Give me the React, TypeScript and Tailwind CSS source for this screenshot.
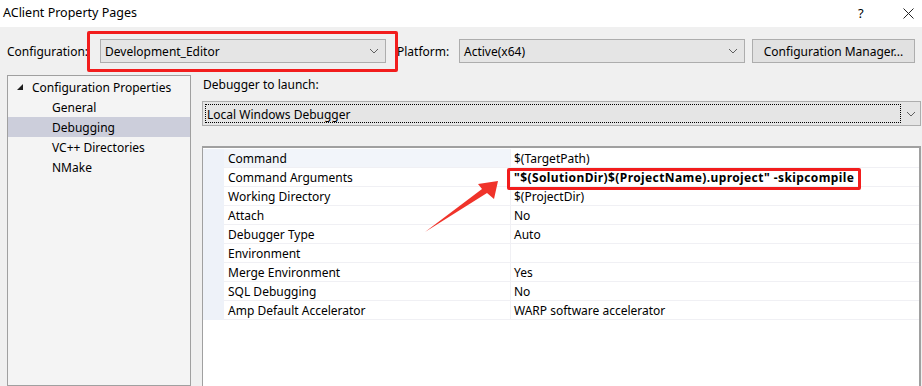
import React from 'react'

const rows: { name: string; value: string; bold?: boolean }[] = [
  { name: 'Command', value: '$(TargetPath)' },
  { name: 'Command Arguments', value: '"$(SolutionDir)$(ProjectName).uproject" -skipcompile', bold: true },
  { name: 'Working Directory', value: '$(ProjectDir)' },
  { name: 'Attach', value: 'No' },
  { name: 'Debugger Type', value: 'Auto' },
  { name: 'Environment', value: '' },
  { name: 'Merge Environment', value: 'Yes' },
  { name: 'SQL Debugging', value: 'No' },
  { name: 'Amp Default Accelerator', value: 'WARP software accelerator' },
]

const treeItems = [
  { label: 'General', selected: false },
  { label: 'Debugging', selected: true },
  { label: 'VC++ Directories', selected: false },
  { label: 'NMake', selected: false },
]

function Chevron() {
  return (
    <svg width="10" height="6" viewBox="0 0 10 6" className="shrink-0">
      <path d="M1 1l4 4 4-4" fill="none" stroke="#606060" strokeWidth="1" />
    </svg>
  )
}

function Combo({ text, width }: { text: string; width: string }) {
  return (
    <div className={`${width} h-[24px] flex items-center justify-between pl-[4px] pr-[6px] border border-[#adadad] bg-[#e5e5e5]`}>
      <span className="pt-[2px]">{text}</span>
      <Chevron />
    </div>
  )
}

export default function App() {
  return (
    <div className="relative w-[922px] h-[386px] overflow-hidden bg-[#f0f0f0] text-[12px] leading-none text-black font-['Noto_Sans','Liberation_Sans',sans-serif]">
      {/* title bar */}
      <div className="h-[27px] bg-white flex items-center pl-[3px] pr-[8px]">
        <span className="flex-1 text-[12.5px]">AClient Property Pages</span>
        <span className="w-[10px] mr-[35px] text-[13px]">?</span>
        <svg width="11" height="11" viewBox="0 0 11 11">
          <path d="M0.5 0.5l10 10M10.5 0.5l-10 10" stroke="#222" strokeWidth="1" />
        </svg>
      </div>

      {/* configuration row */}
      <div className="flex items-center pt-[12px] h-[36px]">
        <span className="w-[100px] pl-[7px] pt-[2px]">Configuration:</span>
        <Combo text="Development_Editor" width="w-[286px]" />
        <span className="w-[73px] pl-[11px] pt-[2px]">Platform:</span>
        <Combo text="Active(x64)" width="w-[286px]" />
        <div className="ml-[7px] w-[163px] h-[24px] flex items-center justify-center pt-[2px] border border-[#adadad] bg-[#e1e1e1]">
          Configuration Manager...
        </div>
      </div>

      {/* body */}
      <div className="flex mt-[12px] h-[311px]">
        {/* tree */}
        <div className="ml-[7px] w-[184px] h-full border border-[#a0a0a0] bg-[#f4f4f4] pt-[1px]">
          <div className="h-[20px] flex items-center">
            <svg width="7" height="7" viewBox="0 0 7 7" className="ml-[9px] mr-[8px]">
              <polygon points="6,0 6,6 0,6" fill="#1e1e1e" />
            </svg>
            <span className="pt-[1px]">Configuration Properties</span>
          </div>
          {treeItems.map((t) => (
            <div key={t.label} className={`h-[20px] flex items-center pl-[44px] pt-[1px] ${t.selected ? 'bg-[#cccedb]' : ''}`}>
              {t.label}
            </div>
          ))}
        </div>

        {/* right side */}
        <div className="ml-[11px] w-[719px] flex flex-col">
          <div className="h-[18px] flex items-center pl-[1px] pt-[1px]">Debugger to launch:</div>
          <div className="mt-[8px] h-[25px] flex items-center border border-[#adadad] bg-[#e5e5e5]">
            <div className="ml-[2px] w-[696px] h-[19px] flex items-center pl-[1px] pt-[2px] border border-dotted border-black">
              Local Windows Debugger
            </div>
            <div className="flex-1 flex justify-center">
              <Chevron />
            </div>
          </div>

          <div className="mt-[20px] flex-1 border-t-2 border-l border-r-2 border-[#a0a0a0] bg-white pt-[1px]">
            {rows.map((r, i) => (
              <div key={r.name} className="flex h-[19px]">
                <div className="w-[21px] bg-[#eef2f9]" />
                <div
                  className={`w-[287px] flex items-center pl-[4px] pt-[2px] border-b border-r border-[#f0f0f4] ${i === 0 ? 'bg-[#f2f5fa]' : ''}`}
                >
                  {r.name}
                </div>
                <div
                  className={`flex-1 flex items-center pl-[3px] pt-[2px] border-b border-[#f0f0f4] ${r.bold ? 'font-bold tracking-[0.4px]' : ''}`}
                >
                  {r.value}
                </div>
              </div>
            ))}
          </div>
        </div>
      </div>

      {/* annotations */}
      <div className="absolute left-[87px] top-[31px] w-[311px] h-[41px] border-[3px] border-[#f21d1d] rounded-[2px]" />
      <div className="absolute left-[507px] top-[168px] w-[354px] h-[22px] border-[3px] border-[#f21d1d] rounded-[2px]" />
      <svg className="absolute left-0 top-0" width="922" height="386" viewBox="0 0 922 386">
        <polygon points="425,232 482,189 478,184 498,181 494,199 487,193" fill="#f0332a" />
      </svg>
    </div>
  )
}
